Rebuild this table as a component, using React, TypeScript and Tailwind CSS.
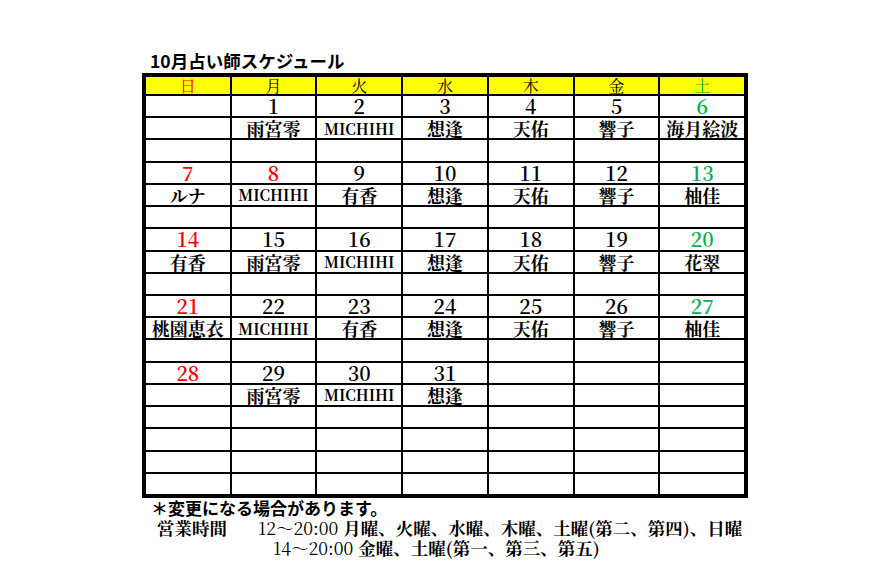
import React from "react";

const SERIF = { fontFamily: '"Noto Serif CJK JP", "Liberation Serif", "Noto Sans CJK JP", serif' };

type Week = { dates: (number | null)[]; names: string[]; extra: number };

const weeks: Week[] = [
  { dates: [null, 1, 2, 3, 4, 5, 6], names: ["", "雨宮零", "MICHIHI", "想逢", "天佑", "響子", "海月絵波"], extra: 1 },
  { dates: [7, 8, 9, 10, 11, 12, 13], names: ["ルナ", "MICHIHI", "有香", "想逢", "天佑", "響子", "柚佳"], extra: 1 },
  { dates: [14, 15, 16, 17, 18, 19, 20], names: ["有香", "雨宮零", "MICHIHI", "想逢", "天佑", "響子", "花翠"], extra: 1 },
  { dates: [21, 22, 23, 24, 25, 26, 27], names: ["桃園恵衣", "MICHIHI", "有香", "想逢", "天佑", "響子", "柚佳"], extra: 1 },
  { dates: [28, 29, 30, 31, null, null, null], names: ["", "雨宮零", "MICHIHI", "想逢", "", "", ""], extra: 4 },
];

const days = ["日", "月", "火", "水", "木", "金", "土"];
const holidays = [8];

function dateColor(col: number, d: number | null) {
  if (d === null) return "text-black";
  if (col === 0 || holidays.includes(d)) return "text-[#ff0000]";
  if (col === 6) return "text-[#00b050]";
  return "text-black";
}

export default function App() {
  return (
    <div className="w-[890px] h-[570px] bg-white">
      <div className="pl-[142px] pt-[48px]">
        <div
          className="pl-[8px] text-[17.5px] leading-[25px] font-bold text-black"
          style={{ fontFamily: '"Noto Sans CJK JP", sans-serif' }}
        >
          10月占い師スケジュール
        </div>

        {/* calendar grid */}
        <div className="w-[606px] h-[425px] border-4 border-black bg-black grid grid-cols-7 grid-rows-[17px_repeat(18,minmax(0,1fr))] gap-[2px]">
          {days.map((d, i) => (
            <div
              key={d}
              className={
                "bg-[#ffff00] flex items-center justify-center text-[16px] leading-none " +
                (i === 0 ? "text-[#ff0000]" : i === 6 ? "text-[#00b050]" : "text-black")
              }
              style={SERIF}
            >
              {d}
            </div>
          ))}
          {weeks.map((w, wi) => (
            <React.Fragment key={wi}>
              {w.dates.map((d, i) => (
                <div
                  key={"d" + i}
                  className={"bg-white flex items-center justify-center text-[20px] font-semibold leading-none " + dateColor(i, d)}
                  style={SERIF}
                >
                  {d ?? ""}
                </div>
              ))}
              {w.names.map((n, i) => (
                <div
                  key={"n" + i}
                  className={
                    "bg-white flex items-center justify-center font-bold leading-none text-black " +
                    (n === "MICHIHI" ? "text-[15px]" : "text-[18px]")
                  }
                  style={SERIF}
                >
                  {n}
                </div>
              ))}
              {Array.from({ length: w.extra * 7 }).map((_, i) => (
                <div key={"e" + i} className="bg-white" />
              ))}
            </React.Fragment>
          ))}
        </div>

        <div className="text-black">
          <div
            className="pl-[9px] text-[17px] leading-[20px] font-bold"
            style={{ fontFamily: '"Noto Sans CJK JP", sans-serif' }}
          >
            ＊変更になる場合があります。
          </div>
          <div className="flex pl-[15px] text-[17.5px] leading-[20px]" style={SERIF}>
            <span className="font-bold w-[101px]">営業時間</span>
            <span>12～20:00</span>
            <span className="font-bold ml-[5px]">月曜、火曜、水曜、木曜、土曜(第二、第四)、日曜</span>
          </div>
          <div className="flex pl-[131px] text-[17.5px] leading-[20px]" style={SERIF}>
            <span>14～20:00</span>
            <span className="font-bold ml-[5px]">金曜、土曜(第一、第三、第五)</span>
          </div>
        </div>
      </div>
    </div>
  );
}
